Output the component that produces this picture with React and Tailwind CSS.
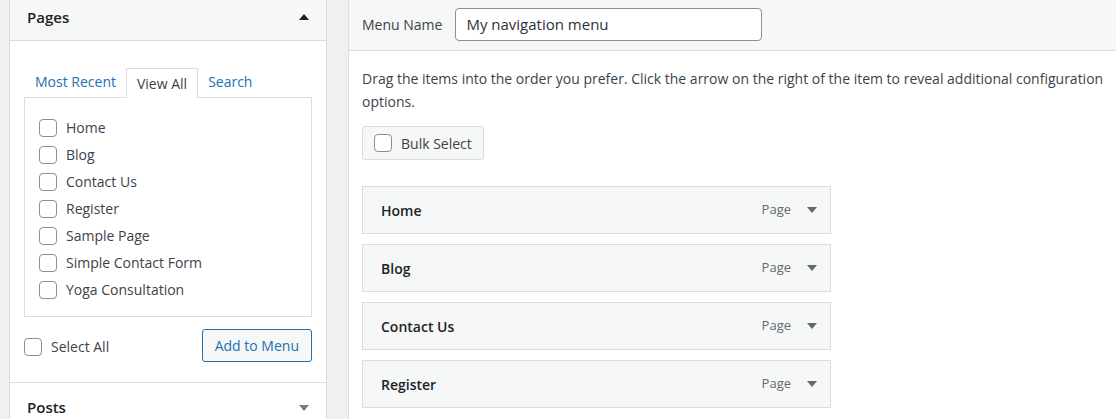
import React from 'react'

const pages = ['Home', 'Blog', 'Contact Us', 'Register', 'Sample Page', 'Simple Contact Form', 'Yoga Consultation']
const menuItems = ['Home', 'Blog', 'Contact Us', 'Register']

const Box = ({ className = '' }) => (
    <span className={`inline-block w-[18px] h-[18px] shrink-0 rounded-[4px] border border-[#8c8f94] bg-white ${className}`}></span>
)

const Caret = ({ up, color = '#1d2327' }) => (
    <svg width="10" height="6" viewBox="0 0 10 6">
        <path d={up ? 'M0 6 L5 0 L10 6 Z' : 'M0 0 L10 0 L5 6 Z'} fill={color} />
    </svg>
)

const App = () => {
    return (
        <div className="w-[1116px] h-[419px] overflow-hidden bg-[#f0f0f1] flex font-['Open_Sans',sans-serif] text-[14px] text-[#3c434a]">
            {/* left column: add menu items */}
            <div className="ml-[9px] w-[318px] shrink-0 border-x border-[#dcdcde] bg-white h-[440px]">
                <div className="h-[41px] bg-[#f6f7f7] border-b border-[#dcdcde] flex items-center justify-between pl-[17px] pr-[17px] pb-[6px]">
                    <span className="text-[15px] font-semibold text-[#1d2327]">Pages</span>
                    <Caret up />
                </div>
                <div className="px-[14px] pt-[26px]">
                    <div className="flex items-end h-[30px] pl-[11px] text-[14px]">
                        <span className="text-[#2271b1] pb-[5px] pr-[10px]">Most Recent</span>
                        <span className="h-[30px] px-[10px] border border-b-0 border-[#dcdcde] bg-white relative top-[1px] flex items-center">View All</span>
                        <span className="text-[#2271b1] pb-[5px] pl-[10px]">Search</span>
                    </div>
                    <div className="border border-[#dcdcde] h-[220px] pt-[16px] pl-[14px]">
                        {pages.map((p) => (
                            <div key={p} className="h-[27px] flex items-center gap-[9px]">
                                <Box />
                                <span>{p}</span>
                            </div>
                        ))}
                    </div>
                    <div className="flex items-center justify-between mt-[12px] h-[33px]">
                        <div className="flex items-center gap-[9px] pt-[2px]">
                            <Box />
                            <span>Select All</span>
                        </div>
                        <button className="h-[33px] px-[12px] rounded-[3px] border border-[#2271b1] bg-[#f6f7f7] text-[#2271b1] text-[14px]">Add to Menu</button>
                    </div>
                </div>
                <div className="mt-[20px] border-t border-[#dcdcde] h-[50px] flex items-center justify-between pl-[17px] pr-[17px]">
                    <span className="text-[15px] font-semibold text-[#1d2327]">Posts</span>
                    <Caret color="#787c82" />
                </div>
            </div>

            {/* right column: menu structure */}
            <div className="ml-[21px] w-[800px] shrink-0 border-l border-[#dcdcde] bg-white h-[440px]">
                <div className="h-[51px] bg-[#f6f7f7] border-b border-[#dcdcde] flex items-center pl-[13px] pb-[2px]">
                    <span className="mr-[13px]">Menu Name</span>
                    <div className="w-[307px] h-[33px] rounded-[4px] border border-[#8c8f94] bg-white flex items-center px-[10px] text-[15px] text-[#2c3338]">My navigation menu</div>
                </div>
                <div className="pl-[13px] pt-[16px]">
                    <p className="w-[745px] leading-[23px]">Drag the items into the order you prefer. Click the arrow on the right of the item to reveal additional configuration options.</p>
                    <div className="mt-[13px] w-[122px] h-[34px] rounded-[3px] border border-[#dcdcde] bg-[#f6f7f7] flex items-center pl-[11px] gap-[9px]">
                        <Box />
                        <span>Bulk Select</span>
                    </div>
                    <div className="mt-[26px] flex flex-col gap-[10px]">
                        {menuItems.map((m) => (
                            <div key={m} className="w-[469px] h-[48px] border border-[#dcdcde] bg-[#f6f7f7] flex items-center pl-[18px] pr-[13px]">
                                <span className="flex-1 font-semibold text-[#1d2327]">{m}</span>
                                <span className="text-[13px] text-[#646970] mr-[16px]">Page</span>
                                <Caret color="#646970" />
                            </div>
                        ))}
                    </div>
                </div>
            </div>
        </div>
    )
}

export default App
